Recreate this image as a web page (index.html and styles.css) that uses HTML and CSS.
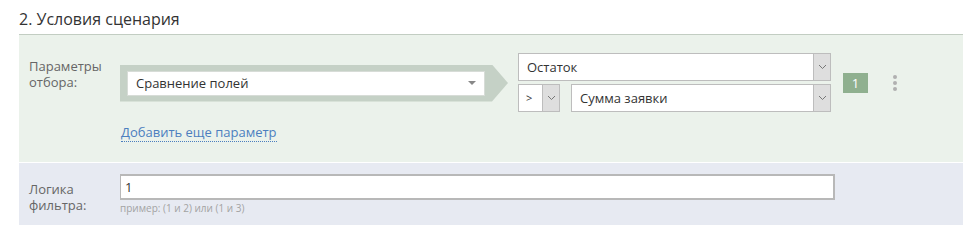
FILE: index.html
```html
<!DOCTYPE html>
<html lang="ru">
<head>
  <meta charset="UTF-8">
  <title>Условия сценария</title>
  <link rel="stylesheet" href="styles.css">
</head>
<body>
  <div class="section">
    <h2 class="section-title">2. Условия сценария</h2>

    <div class="filters">
      <div class="row">
        <div class="label">Параметры отбора:</div>
        <div class="field">
          <div class="filter-line">
            <div class="type-box">
              <div class="type-select">
                <span>Сравнение полей</span>
                <span class="caret"></span>
              </div>
            </div>
            <div class="compare">
              <div class="select wide">
                <span class="select-text">Остаток</span>
                <span class="select-btn"><svg width="9" height="6" viewBox="0 0 9 6"><path d="M1 1l3.5 3.5L8 1" fill="none" stroke="#777" stroke-width="1"/></svg></span>
              </div>
              <div class="compare-bottom">
                <div class="select small">
                  <span class="select-text">&gt;</span>
                  <span class="select-btn"><svg width="9" height="6" viewBox="0 0 9 6"><path d="M1 1l3.5 3.5L8 1" fill="none" stroke="#777" stroke-width="1"/></svg></span>
                </div>
                <div class="select rest">
                  <span class="select-text">Сумма заявки</span>
                  <span class="select-btn"><svg width="9" height="6" viewBox="0 0 9 6"><path d="M1 1l3.5 3.5L8 1" fill="none" stroke="#777" stroke-width="1"/></svg></span>
                </div>
              </div>
            </div>
            <div class="badge">1</div>
            <div class="kebab"><i></i><i></i><i></i></div>
          </div>
          <a href="#" class="add-link">Добавить еще параметр</a>
        </div>
      </div>
    </div>

    <div class="logic">
      <div class="row">
        <div class="label">Логика фильтра:</div>
        <div class="field">
          <input class="logic-input" type="text" value="1">
          <div class="hint">пример: (1 и 2) или (1 и 3)</div>
        </div>
      </div>
    </div>
  </div>
</body>
</html>
```

FILE: styles.css
```css
body {
  margin: 0;
  font-family: "Open Sans", "Noto Sans", sans-serif;
  color: #333;
  background: #fff;
}

.section {
  width: 944px;
  margin-left: 19px;
}

.section-title {
  margin: 0;
  height: 35px;
  box-sizing: border-box;
  padding-top: 8px;
  font-size: 16px;
  font-weight: normal;
  line-height: 22px;
  color: #333;
  border-bottom: 1px solid #c2cdc2;
}

.row {
  display: flex;
  align-items: flex-start;
}

.label {
  width: 91px;
  flex-shrink: 0;
  padding-left: 10px;
  font-size: 13px;
  line-height: 16px;
  color: #666;
}

.field {
  flex: 1;
}

/* filter panel */
.filters {
  background: #ebf2eb;
  padding: 18px 0 20px;
  border-bottom: 1px solid #fff;
}

.filters .label {
  padding-top: 5px;
}

.filter-line {
  display: flex;
  align-items: center;
}

.type-box {
  width: 388px;
  height: 37px;
  box-sizing: border-box;
  padding: 6px 23px 6px 7px;
  background: #c5d1c6;
  clip-path: polygon(0 0, 372px 0, 100% 50%, 372px 100%, 0 100%);
  margin-top: 1px;
}

.type-select {
  display: flex;
  align-items: center;
  justify-content: space-between;
  height: 25px;
  box-sizing: border-box;
  padding: 0 8px;
  background: #fff;
  border: 1px solid #d7dcd7;
  font-size: 13px;
}

.caret {
  width: 0;
  height: 0;
  border-left: 4px solid transparent;
  border-right: 4px solid transparent;
  border-top: 4px solid #888;
}

.compare {
  margin-left: 10px;
  width: 313px;
}

.compare-bottom {
  display: flex;
  gap: 11px;
  margin-top: 3px;
}

.select {
  display: flex;
  height: 28px;
  box-sizing: border-box;
  background: #fff;
  border: 1px solid #bdbdbd;
  font-size: 13px;
}

.select-text {
  flex: 1;
  padding-left: 8px;
  line-height: 26px;
}

.select-btn {
  width: 16px;
  display: flex;
  align-items: center;
  justify-content: center;
  background: #dedede;
  border-left: 1px solid #bdbdbd;
}

.select.small {
  width: 42px;
}

.select.small .select-text {
  padding-left: 7px;
  font-size: 11px;
}

.select.rest {
  flex: 1;
}

.badge {
  width: 25px;
  height: 20px;
  margin-left: 12px;
  margin-top: 1px;
  background: #8fb08f;
  color: #fff;
  font-size: 13px;
  line-height: 20px;
  text-align: center;
}

.kebab {
  display: flex;
  flex-direction: column;
  gap: 2px;
  margin-left: 25px;
}

.kebab i {
  width: 4px;
  height: 4px;
  border-radius: 50%;
  background: #b0b0b0;
}

.add-link {
  display: inline-block;
  margin-top: 12px;
  margin-left: 1px;
  font-size: 13px;
  line-height: 17px;
  color: #4c7fbf;
  text-decoration: none;
  border-bottom: 1px dotted #4c7fbf;
}

/* logic panel */
.logic {
  background: #e7eaf2;
  padding: 11px 0 10px;
}

.logic .label {
  padding-top: 7px;
}

.logic-input {
  display: block;
  width: 715px;
  height: 26px;
  box-sizing: border-box;
  margin: 0;
  padding: 0 4px;
  border: 1px solid #b8b8b8;
  border-width: 2px 2px 2px 1px;
  font-family: inherit;
  font-size: 13px;
  color: #333;
  outline: none;
}

.hint {
  margin-top: 1px;
  font-size: 10px;
  line-height: 14px;
  color: #a3a3a3;
}
```
